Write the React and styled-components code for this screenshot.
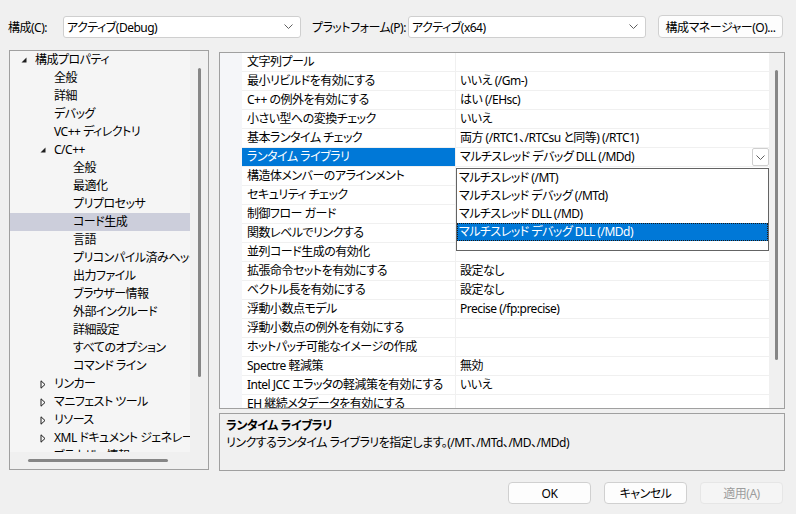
import React from "react";
import styled, { createGlobalStyle } from "styled-components";

const FONT = `"Noto Sans", "Noto Sans CJK JP", sans-serif`;

const GlobalStyle = createGlobalStyle`
  body {
    margin: 0;
    background: #f0f0f0;
  }
  * { box-sizing: border-box; }
`;

// ツリーの項目
const treeItems = [
  { level: 0, text: "構成プロパティ", arrow: "open" },
  { level: 1, text: "全般" },
  { level: 1, text: "詳細" },
  { level: 1, text: "デバッグ" },
  { level: 1, text: "VC++ ディレクトリ" },
  { level: 1, text: "C/C++", arrow: "open" },
  { level: 2, text: "全般" },
  { level: 2, text: "最適化" },
  { level: 2, text: "プリプロセッサ" },
  { level: 2, text: "コード生成", selected: true },
  { level: 2, text: "言語" },
  { level: 2, text: "プリコンパイル済みヘッダー" },
  { level: 2, text: "出力ファイル" },
  { level: 2, text: "ブラウザー情報" },
  { level: 2, text: "外部インクルード" },
  { level: 2, text: "詳細設定" },
  { level: 2, text: "すべてのオプション" },
  { level: 2, text: "コマンド ライン" },
  { level: 1, text: "リンカー", arrow: "closed" },
  { level: 1, text: "マニフェスト ツール", arrow: "closed" },
  { level: 1, text: "リソース", arrow: "closed" },
  { level: 1, text: "XML ドキュメント ジェネレーター", arrow: "closed" },
  { level: 1, text: "ブラウザー情報", arrow: "closed" },
];

// プロパティ一覧
const props = [
  ["文字列プール", ""],
  ["最小リビルドを有効にする", "いいえ (/Gm-)"],
  ["C++ の例外を有効にする", "はい (/EHsc)"],
  ["小さい型への変換チェック", "いいえ"],
  ["基本ランタイム チェック", "両方 (/RTC1、/RTCsu と同等) (/RTC1)"],
  ["ランタイム ライブラリ", "マルチスレッド デバッグ DLL (/MDd)", true],
  ["構造体メンバーのアラインメント", ""],
  ["セキュリティ チェック", ""],
  ["制御フロー ガード", ""],
  ["関数レベルでリンクする", ""],
  ["並列コード生成の有効化", ""],
  ["拡張命令セットを有効にする", "設定なし"],
  ["ベクトル長を有効にする", "設定なし"],
  ["浮動小数点モデル", "Precise (/fp:precise)"],
  ["浮動小数点の例外を有効にする", ""],
  ["ホットパッチ可能なイメージの作成", ""],
  ["Spectre 軽減策", "無効"],
  ["Intel JCC エラッタの軽減策を有効にする", "いいえ"],
  ["EH 継続メタデータを有効にする", ""],
];

const options = [
  "マルチスレッド (/MT)",
  "マルチスレッド デバッグ (/MTd)",
  "マルチスレッド DLL (/MD)",
  "マルチスレッド デバッグ DLL (/MDd)",
];

const Chevron = () => (
  <svg width="9" height="5" viewBox="0 0 9 5">
    <path d="M0.5 0.5 L4.5 4.5 L8.5 0.5" stroke="#5f5f5f" fill="none" strokeWidth="1" />
  </svg>
);

const OpenArrow = () => (
  <svg width="6" height="6" viewBox="0 0 6 6">
    <path d="M5.5 0.5 V5.5 H0.5 Z" fill="#1e1e1e" />
  </svg>
);

const ClosedArrow = () => (
  <svg width="6" height="9" viewBox="0 0 6 9">
    <path d="M1 0.8 L5 4.5 L1 8.2 Z" fill="none" stroke="#1e1e1e" strokeWidth="1" />
  </svg>
);

function App() {
  return (
    <Page>
      <GlobalStyle />
      <TopBar>
        <Label width={55}>構成(C):</Label>
        <Combo>
          <span>アクティブ(Debug)</span>
          <Chevron />
        </Combo>
        <Label width={96} $ml={11}>プラットフォーム(P):</Label>
        <Combo>
          <span>アクティブ(x64)</span>
          <Chevron />
        </Combo>
        <Button $w={125} $ml={12} $h={23}>構成マネージャー(O)...</Button>
      </TopBar>

      <Main>
        <Tree>
          <TreeContent>
            {treeItems.map((item, i) => (
              <TreeRow key={i} $level={item.level} $selected={item.selected}>
                <ArrowBox>
                  {item.arrow === "open" && <OpenArrow />}
                  {item.arrow === "closed" && <ClosedArrow />}
                </ArrowBox>
                <span>{item.text}</span>
              </TreeRow>
            ))}
          </TreeContent>
          <VScroll>
            <VThumb $top={17} $height={309} />
          </VScroll>
          <HScroll>
            <HThumb />
          </HScroll>
          <Corner />
        </Tree>

        <RightColumn>
          <Grid>
            <GridBody>
              {props.map(([name, value, selected], i) => (
                <PropRow key={i}>
                  <Margin />
                  <NameCell $selected={selected}>{name}</NameCell>
                  <ValueCell>
                    {value}
                    {selected && (
                      <>
                        <DropButton>
                          <Chevron />
                        </DropButton>
                        <DropList>
                          {options.map((o, j) => (
                            <Option key={j} $selected={j === 3}>{o}</Option>
                          ))}
                        </DropList>
                      </>
                    )}
                  </ValueCell>
                </PropRow>
              ))}
            </GridBody>
            <GridScroll>
              <VThumb $top={17} $height={290} />
            </GridScroll>
          </Grid>
          <Description>
            <DescTitle>ランタイム ライブラリ</DescTitle>
            <div>リンクするランタイム ライブラリを指定します。(/MT、/MTd、/MD、/MDd)</div>
          </Description>
        </RightColumn>
      </Main>

      <Footer>
        <Button $w={83}>OK</Button>
        <Button $w={83}>キャンセル</Button>
        <Button $w={83} disabled>適用(A)</Button>
      </Footer>
    </Page>
  );
}

//スタイル
const Page = styled.div`
  width: 796px;
  height: 514px;
  overflow: hidden;
  background: #f0f0f0;
  font-family: ${FONT};
  font-size: 12px;
  letter-spacing: -0.5px;
  color: #000;
  font-feature-settings: "palt";
`;

const TopBar = styled.div`
  display: flex;
  align-items: center;
  height: 50px;
  padding: 15px 0 12px 8px;
`;

const Label = styled.div`
  width: ${(p) => p.width}px;
  flex: none;
  margin-left: ${(p) => p.$ml || 0}px;
  white-space: nowrap;
`;

const Combo = styled.div`
  width: 238px;
  flex: none;
  height: 22px;
  display: flex;
  align-items: center;
  justify-content: space-between;
  padding: 0 7px 0 3px;
  background: #fff;
  border: 1px solid #cfcfcf;
  border-radius: 3px;
`;

const Button = styled.button`
  width: ${(p) => p.$w}px;
  height: ${(p) => p.$h || 22}px;
  flex: none;
  margin-left: ${(p) => p.$ml || 0}px;
  font-family: ${FONT};
  font-size: 12px;
  letter-spacing: -0.5px;
  font-feature-settings: "palt";
  color: #000;
  background: #fdfdfd;
  border: 1px solid #d0d0d0;
  border-radius: 4px;
  padding: 0;
  &:disabled {
    color: #9d9d9d;
    background: #f5f5f5;
    border-color: #e6e6e6;
  }
`;

const Main = styled.div`
  display: flex;
  gap: 10px;
  padding-left: 9px;
  height: 421px;
`;

const Tree = styled.div`
  width: 200px;
  height: 420px;
  border: 1px solid #a0a0a0;
  display: grid;
  grid-template-columns: 180px 1fr;
  grid-template-rows: 401px 1fr;
`;

const TreeContent = styled.div`
  background: #f5f5f5;
  overflow: hidden;
  white-space: nowrap;
`;

const TreeRow = styled.div`
  height: 18px;
  line-height: 18px;
  display: flex;
  align-items: center;
  padding-left: ${(p) => 6 + p.$level * 19}px;
  background: ${(p) => (p.$selected ? "#cccedb" : "transparent")};
`;

const ArrowBox = styled.div`
  width: 19px;
  flex: none;
  display: flex;
  align-items: center;
  padding-left: 5px;
`;

const VScroll = styled.div`
  background: #f0f0f0;
  display: flex;
  justify-content: center;
  padding-left: 1px;
`;

const VThumb = styled.div`
  width: 3px;
  height: ${(p) => p.$height}px;
  margin-top: ${(p) => p.$top}px;
  background: #868686;
  border-radius: 2px;
`;

const HScroll = styled.div`
  background: #f0f0f0;
  padding: 7px 0 0 18px;
`;

const HThumb = styled.div`
  width: 140px;
  height: 3px;
  background: #868686;
  border-radius: 2px;
`;

const Corner = styled.div`
  background: #f0f0f0;
`;

const RightColumn = styled.div`
  width: 566px;
  display: flex;
  flex-direction: column;
  gap: 4px;
  padding-top: 2px;
`;

const Grid = styled.div`
  height: 357px;
  border: 1px solid #a0a0a0;
  display: flex;
  background: #fff;
`;

const GridBody = styled.div`
  flex: 1;
  overflow: hidden;
  white-space: nowrap;
`;

const PropRow = styled.div`
  display: grid;
  grid-template-columns: 22px 214px 1fr;
  height: 19px;
`;

const Margin = styled.div`
  background: #f5f6f9;
`;

const NameCell = styled.div`
  padding-left: 5px;
  line-height: 18px;
  border-bottom: 1px solid #f0f0f0;
  border-right: 1px solid #f0f0f0;
  background: ${(p) => (p.$selected ? "#0078d7" : "#fff")};
  color: ${(p) => (p.$selected ? "#fff" : "#000")};
  overflow: hidden;
`;

const ValueCell = styled.div`
  position: relative;
  padding-left: 4px;
  line-height: 18px;
  border-bottom: 1px solid #f0f0f0;
`;

const DropButton = styled.div`
  position: absolute;
  right: 0;
  top: 0;
  width: 17px;
  height: 18px;
  border: 1px solid #cfcfcf;
  border-radius: 2px;
  background: #fff;
  display: flex;
  align-items: center;
  justify-content: center;
`;

const DropList = styled.div`
  position: absolute;
  left: 0;
  top: 20px;
  width: 313px;
  height: 83px;
  background: #fff;
  border: 1px solid #646464;
  z-index: 2;
`;

const Option = styled.div`
  height: 18px;
  line-height: 18px;
  padding-left: 2px;
  background: ${(p) => (p.$selected ? "#0078d7" : "#fff")};
  color: ${(p) => (p.$selected ? "#fff" : "#000")};
  outline: ${(p) => (p.$selected ? "1px dotted #1a1a1a" : "none")};
  outline-offset: -1px;
`;

const GridScroll = styled.div`
  width: 15px;
  background: #f0f0f0;
  display: flex;
  justify-content: center;
`;

const Description = styled.div`
  height: 58px;
  border: 1px solid #a0a0a0;
  background: #f0f0f0;
  padding: 3px 6px;
  line-height: 17px;
  white-space: nowrap;
`;

const DescTitle = styled.div`
  font-weight: bold;
`;

const Footer = styled.div`
  display: flex;
  justify-content: flex-end;
  gap: 13px;
  padding: 11px 13px 0 0;
`;

export default App;
